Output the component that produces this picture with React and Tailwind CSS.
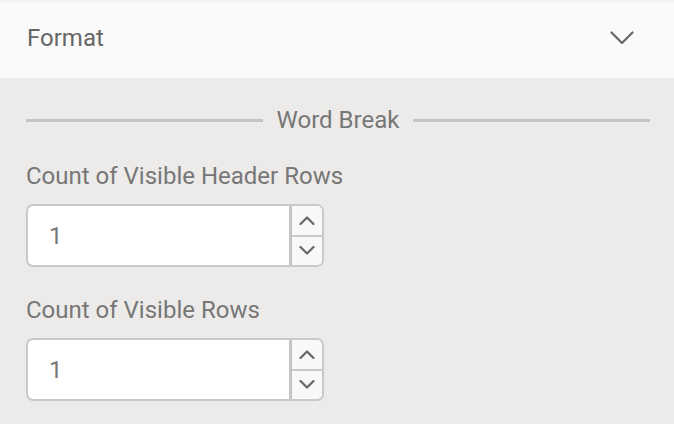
import { useState } from 'react'

function Chevron({ up }) {
  return (
    <svg viewBox="0 0 16 9" width="16" height="9" fill="none" stroke="#666" strokeWidth="2.2" strokeLinecap="round" strokeLinejoin="round">
      <path d={up ? 'M1.5 8 L8 1.5 L14.5 8' : 'M1.5 1 L8 7.5 L14.5 1'} />
    </svg>
  )
}

function NumberBox({ value }) {
  return (
    <div className="mt-[14px] flex w-[298px] h-[63px] rounded-[7px] border-2 border-[#c9c9c9] bg-white overflow-hidden">
      <div className="flex-1 flex items-center pl-[21px] text-[24px] text-[#777]">{value}</div>
      <div className="w-[33px] flex flex-col border-l-[3px] border-[#c4c4c4]">
        <button className="flex-1 flex items-center justify-center bg-[#f8f8f8]">
          <Chevron up />
        </button>
        <button className="flex-1 flex items-center justify-center bg-[#f8f8f8] border-t-2 border-[#c9c9c9]">
          <Chevron />
        </button>
      </div>
    </div>
  )
}

export default function App() {
  const [open] = useState(true)
  return (
    <div className="w-[674px] h-[424px] overflow-hidden bg-[#ecebe9] font-['Roboto',sans-serif]">
      {/* Section header */}
      <div className="flex items-center justify-between h-[78px] pb-[6px] pl-[27px] pr-[40px] bg-[#fafafa] border-t-[3px] border-[#f3f3f5]">
        <span className="text-[24px] text-[#666]">Format</span>
        <svg viewBox="0 0 24 14" width="24" height="14" fill="none" stroke="#666" strokeWidth="2.2" strokeLinecap="round" strokeLinejoin="round" className={open ? '' : 'rotate-180'}>
          <path d="M1.5 1.5 L12 12 L22.5 1.5" />
        </svg>
      </div>

      <div className="pl-[26px] pr-[24px]">
        {/* Divider */}
        <div className="mt-[28px] flex items-center h-[28px]">
          <div className="flex-1 h-[3px] bg-[#c4c4c4]" />
          <span className="px-[14px] text-[24px] leading-[28px] text-[#777]">Word Break</span>
          <div className="flex-1 h-[3px] bg-[#c4c4c4]" />
        </div>

        <div className="mt-[28px] text-[24px] leading-[28px] text-[#777]">Count of Visible Header Rows</div>
        <NumberBox value="1" />

        <div className="mt-[29px] text-[24px] leading-[28px] text-[#777]">Count of Visible Rows</div>
        <NumberBox value="1" />
      </div>
    </div>
  )
}
